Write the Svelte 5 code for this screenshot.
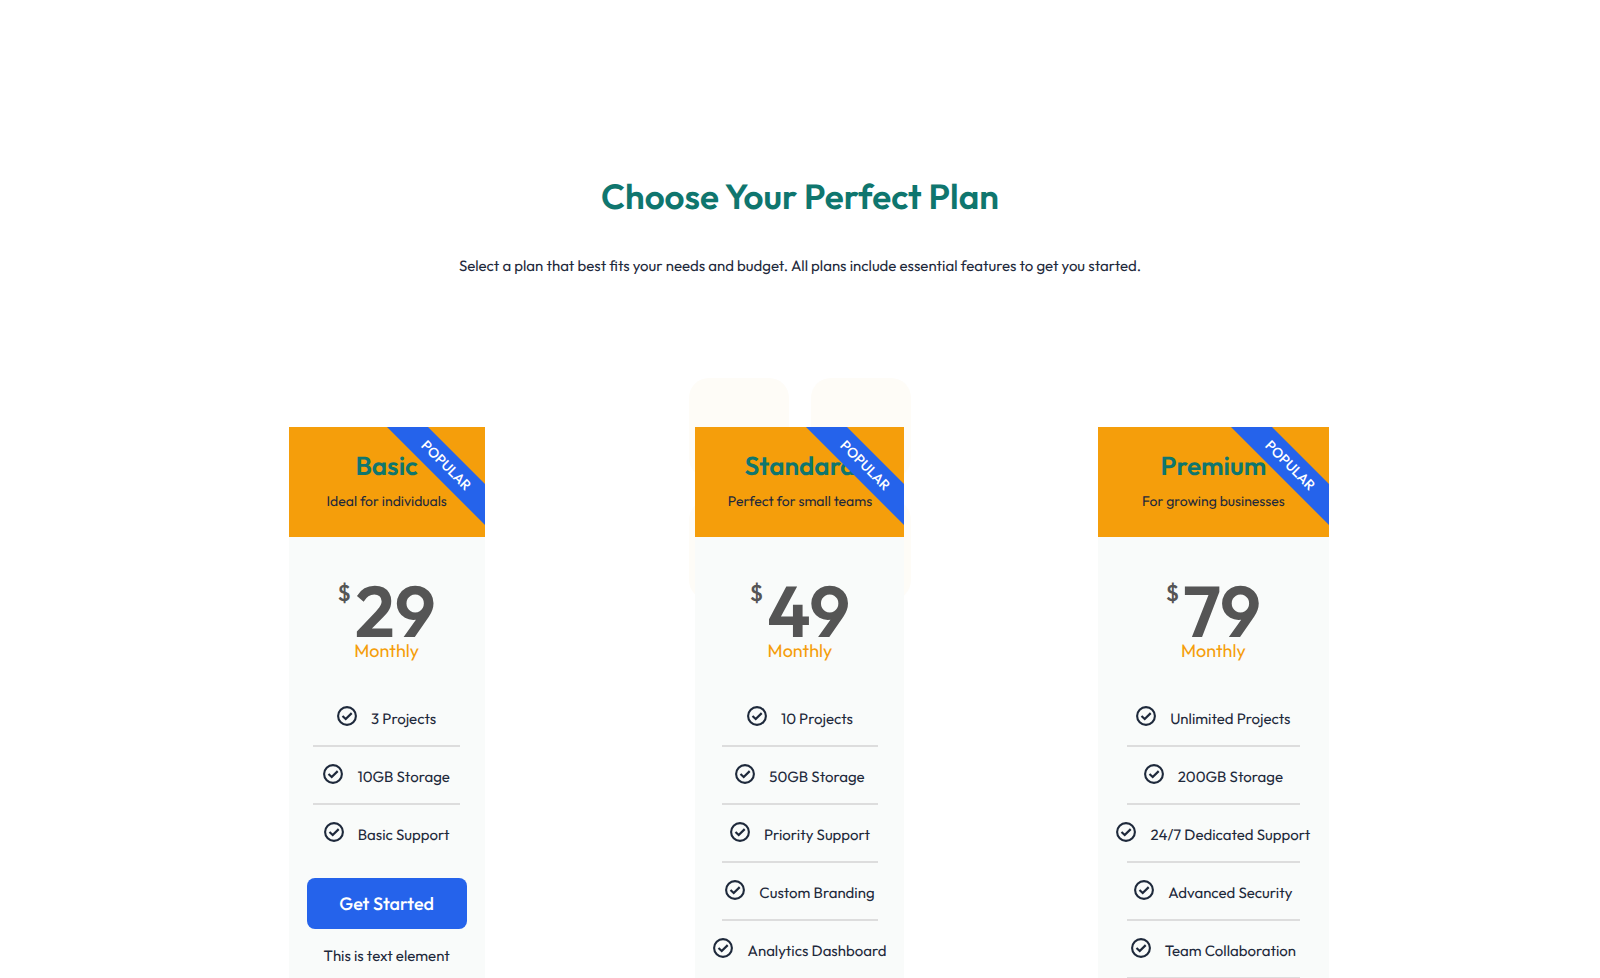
<script>
  const plans = [
    {
      name: 'Basic',
      tagline: 'Ideal for individuals',
      price: 29,
      features: ['3 Projects', '10GB Storage', 'Basic Support'],
      action: 'Get Started',
      note: 'This is text element'
    },
    {
      name: 'Standard',
      tagline: 'Perfect for small teams',
      price: 49,
      features: ['10 Projects', '50GB Storage', 'Priority Support', 'Custom Branding', 'Analytics Dashboard'],
      backdrop: true
    },
    {
      name: 'Premium',
      tagline: 'For growing businesses',
      price: 79,
      features: ['Unlimited Projects', '200GB Storage', '24/7 Dedicated Support', 'Advanced Security', 'Team Collaboration'],
      continues: true
    }
  ];
</script>

<main class="pricing">
  <header class="intro">
    <h1>Choose Your Perfect Plan</h1>
    <p>Select a plan that best fits your needs and budget. All plans include essential features to get you started.</p>
  </header>

  <div class="plans">
    {#each plans as plan}
      <div class="column">
        {#if plan.backdrop}
          <div class="backdrop" aria-hidden="true"><i></i><i></i><i></i><i></i></div>
        {/if}
        <section class="card {plan.name.toLowerCase()}">
          <div class="head">
            <h2>{plan.name}</h2>
            <p>{plan.tagline}</p>
            <span class="ribbon">POPULAR</span>
          </div>
          <div class="price">
            <span class="currency">$</span>
            <span class="amount">{plan.price}</span>
          </div>
          <p class="period">Monthly</p>
          <ul class:continues={plan.continues}>
            {#each plan.features as feature}
              <li>
                <svg viewBox="0 0 20 20" width="20" height="20" aria-hidden="true">
                  <circle cx="10" cy="10" r="8.9" />
                  <path class="tick" d="M5.5 10 8.7 13 14.7 7.1" />
                </svg>
                <span>{feature}</span>
              </li>
            {/each}
          </ul>
          {#if plan.action}
            <button type="button">{plan.action}</button>
            <p class="note">{plan.note}</p>
          {/if}
        </section>
      </div>
    {/each}
  </div>
</main>

<style>
  :global(body) {
    margin: 0;
    background: #fff;
  }
  .pricing {
    box-sizing: border-box;
    max-width: 1240px;
    margin: 0 auto;
    padding-top: 173px;
    font-family: Outfit, Lato, sans-serif;
    font-size: 15px;
    font-weight: 400;
    line-height: 24px;
    color: #1e293b;
    text-rendering: geometricPrecision;
  }
  h1, h2, p, ul {
    margin: 0;
    padding: 0;
  }
  .intro {
    text-align: center;
    padding-bottom: 149px;
  }
  h1 {
    margin-bottom: 33px;
    font-size: 35px;
    line-height: 48px;
    font-weight: 600;
    color: #0f766e;
  }
  .plans {
    display: grid;
    grid-template-columns: repeat(3, 1fr);
  }
  .column {
    position: relative;
    display: flex;
    justify-content: center;
  }
  .backdrop {
    position: absolute;
    top: -49px;
    left: 50%;
    transform: translateX(-50%);
    display: grid;
    grid-template-columns: 100px 100px;
    grid-auto-rows: 100px;
    gap: 22px;
  }
  .backdrop i {
    border-radius: 20px;
    background: #fefcf7;
  }
  .card {
    position: relative;
    box-sizing: border-box;
    display: flex;
    flex-direction: column;
    align-items: center;
    max-width: 100%;
    padding-bottom: 32px;
    background: #f9fbfa;
  }
  .basic { width: 196px; }
  .standard { width: 209px; }
  .premium { width: 231px; }
  .head {
    position: relative;
    box-sizing: border-box;
    width: 100%;
    height: 110px;
    padding-top: 21px;
    overflow: hidden;
    text-align: center;
    background: #f59e0b;
  }
  h2 {
    font-size: 26px;
    line-height: 36px;
    font-weight: 600;
    color: #0f766e;
  }
  .head p {
    margin-top: 5px;
    font-size: 14px;
  }
  .ribbon {
    position: absolute;
    top: 24px;
    right: -51px;
    width: 180px;
    line-height: 29px;
    font-size: 14px;
    font-weight: 500;
    color: #fff;
    background: #2563eb;
    transform: rotate(45deg);
  }
  .price {
    display: flex;
    gap: 4px;
    margin-top: 40px;
    color: #555;
    font-weight: 600;
  }
  .currency {
    font-size: 23px;
    line-height: 32px;
    font-weight: 500;
  }
  .amount {
    font-size: 72px;
    line-height: 68px;
  }
  .period {
    margin-top: -6px;
    font-size: 18px;
    color: #f59e0b;
  }
  ul {
    width: 100%;
    margin-top: 25px;
    list-style: none;
  }
  li {
    position: relative;
    box-sizing: border-box;
    display: flex;
    justify-content: center;
    align-items: center;
    gap: 14px;
    height: 58px;
    padding-bottom: 2px;
    white-space: nowrap;
  }
  li span {
    padding-top: 5px;
  }
  li:not(:last-child)::after,
  .continues li::after {
    content: '';
    position: absolute;
    bottom: -1px;
    left: 12.5%;
    width: 75%;
    height: 2px;
    background: #ddd;
  }
  svg {
    flex: none;
    fill: none;
    stroke: #1e293b;
    stroke-width: 2.1;
  }
  .tick {
    stroke-width: 2.2;
  }
  button {
    width: 160px;
    height: 51px;
    margin-top: 16px;
    border: 0;
    border-radius: 8px;
    font: 500 18px/24px Outfit, Lato, sans-serif;
    text-rendering: inherit;
    color: #fff;
    background: #2563eb;
    cursor: pointer;
  }
  .note {
    margin-top: 15px;
  }
</style>
